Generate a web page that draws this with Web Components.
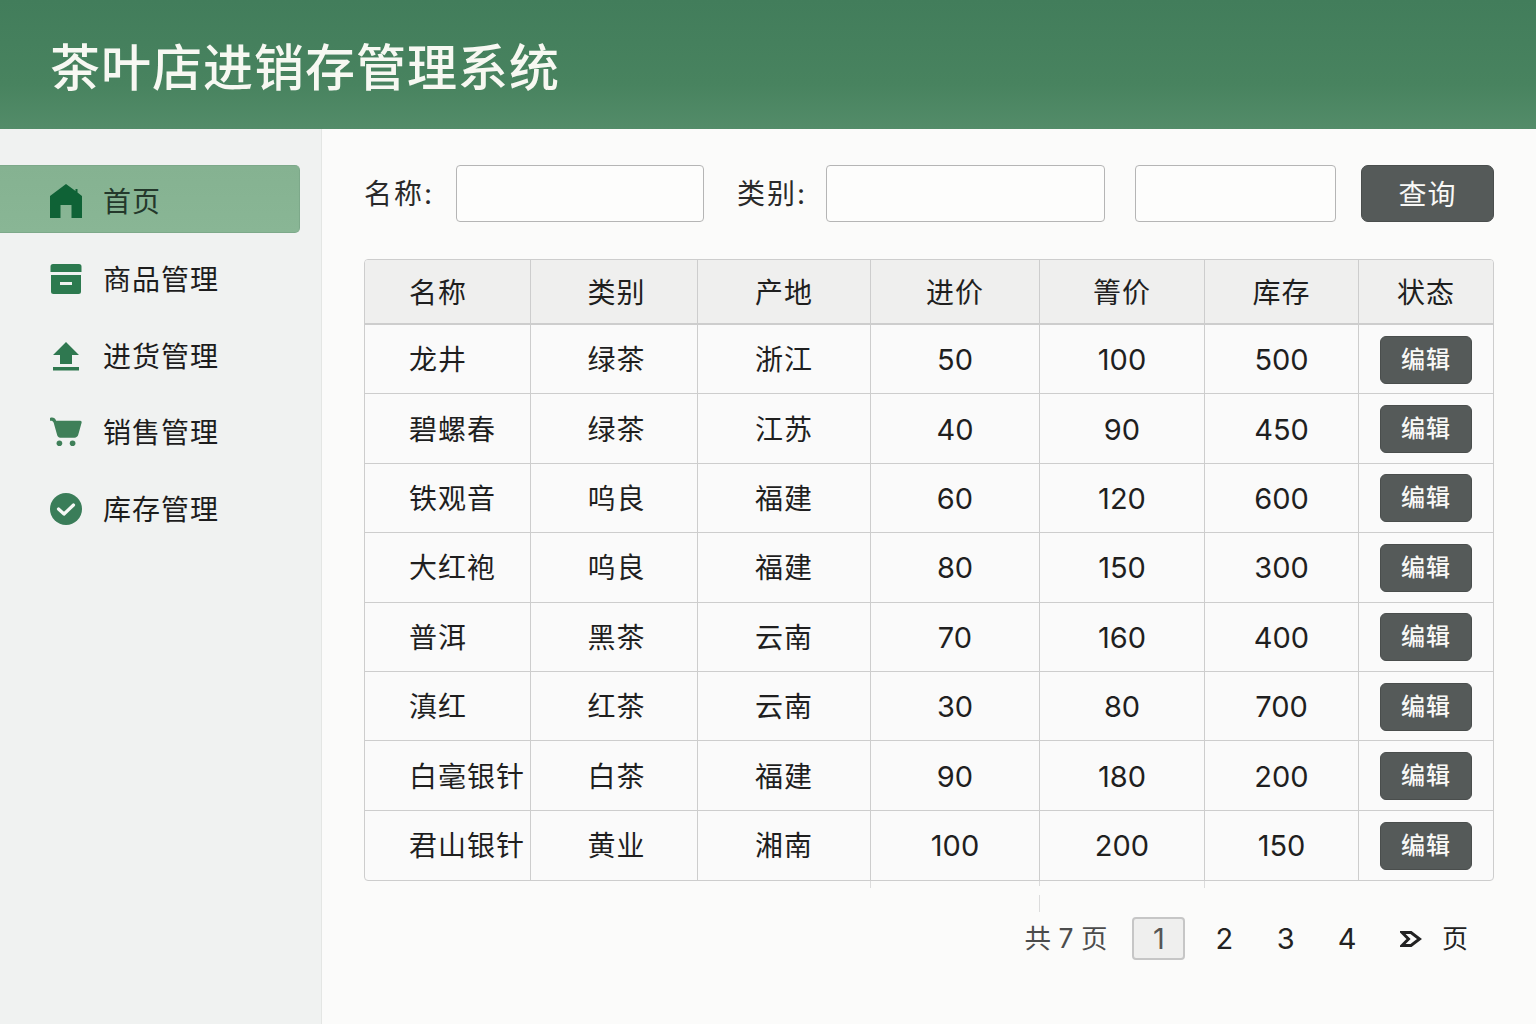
<!DOCTYPE html>
<html lang="zh-CN">
<head>
<meta charset="utf-8">
<title>茶叶店进销存管理系统</title>
<style>
  html, body { margin: 0; padding: 0; height: 100%; background: #fbfbfa; overflow: hidden; }
  body { font-family: "Inter", "Noto Sans CJK SC", sans-serif; color: #1f1f1f; }
</style>
</head>
<body>
<tea-app>
  <app-header slot="top">茶叶店进销存管理系统</app-header>
  <side-nav slot="side">
    <nav-item active label="首页">
      <svg slot="icon" viewBox="0 0 32 36" width="32" height="36"><path fill="#0f6236" d="M16 1 L25.500 8 V6 H27.500 V9.500 L32 13 V35 H21.500 V22 H10.500 V35 H0 V13 Z"/></svg>
    </nav-item>
    <nav-item label="商品管理">
      <svg slot="icon" viewBox="0 0 32 32" width="32" height="32"><path fill="#2c7a4f" d="M3 1 H29 A2.500 2.500 0 0 1 31.500 3.500 V9 H.5 V3.500 A2.500 2.500 0 0 1 3 1 Z M1 12 H31 V28.500 A2.500 2.500 0 0 1 28.500 31 H3.500 A2.500 2.500 0 0 1 1 28.500 Z"/><rect x="10" y="19" width="12" height="3" fill="#f0f2f0"/></svg>
    </nav-item>
    <nav-item label="进货管理">
      <svg slot="icon" viewBox="0 0 32 32" width="32" height="32"><path fill="#2f7850" d="M16 2 L29 15 H22 V24 H10 V15 H3 Z"/><rect x="3" y="27" width="26" height="3.500" fill="#2f7850"/></svg>
    </nav-item>
    <nav-item label="销售管理">
      <svg slot="icon" viewBox="0 0 34 32" width="34" height="32"><path fill="#3f8059" d="M0 1 C3 0 5.500 1 6.500 4 H32 C33.500 4 34 5 33.500 6.500 L30 19 C29.500 21 28 22 26 22 H11 C9 22 8 21 7.500 19 L4 6.500 C3.500 4.500 2.500 4 0 4 Z"/><circle cx="10" cy="28" r="3" fill="#3f8059"/><circle cx="24" cy="28" r="3" fill="#3f8059"/></svg>
    </nav-item>
    <nav-item label="库存管理">
      <svg slot="icon" viewBox="0 0 32 32" width="32" height="32"><circle cx="16" cy="16" r="16" fill="#3a7d59"/><path d="M8.500 16 L14 21 L23.500 12" fill="none" stroke="#f6f8f6" stroke-width="3.200" stroke-linecap="round" stroke-linejoin="round"/></svg>
    </nav-item>
  </side-nav>
  <filter-bar slot="main"></filter-bar>
  <data-table slot="main"></data-table>
  <page-nav slot="main"></page-nav>
</tea-app>

<script>
(function(){
  const CJK = '"Inter", "Noto Sans CJK SC", sans-serif';

  class TeaApp extends HTMLElement {
    constructor() {
      super();
      this.attachShadow({mode: 'open'}).innerHTML = `
        <style>
          :host { display: grid; grid-template-columns: 322px 1fr; grid-template-rows: 129px 895px; width: 1536px; height: 1024px; }
          .top { grid-column: 1 / 3; }
          .side { background: #f0f2f1; border-right: 1px solid #e4e6e4; box-sizing: border-box; padding: 36px 21px 0 0; }
          .main { padding: 36px 42px 0; display: flex; flex-direction: column; background: #fbfbfa; }
        </style>
        <div class="top"><slot name="top"></slot></div>
        <div class="side"><slot name="side"></slot></div>
        <div class="main"><slot name="main"></slot></div>
      `;
    }
  }
  customElements.define('tea-app', TeaApp);

  class AppHeader extends HTMLElement {
    constructor() {
      super();
      this.attachShadow({mode: 'open'}).innerHTML = `
        <style>
          :host { display: flex; align-items: center; height: 129px; box-sizing: border-box; padding: 7px 0 0 50px;
            background: linear-gradient(180deg, #427d5b 0%, #48835f 65%, #538c69 100%);
            color: #f7f8f2; font: 500 50px/1 ${CJK}; letter-spacing: 1px; }
        </style>
        <slot></slot>
      `;
    }
  }
  customElements.define('app-header', AppHeader);

  class SideNav extends HTMLElement {
    constructor() {
      super();
      this.attachShadow({mode: 'open'}).innerHTML = `
        <style>:host { display: flex; flex-direction: column; }</style>
        <slot></slot>
      `;
    }
  }
  customElements.define('side-nav', SideNav);

  class NavItem extends HTMLElement {
    constructor() {
      super();
      this.attachShadow({mode: 'open'}).innerHTML = `
        <style>
          :host { display: flex; align-items: center; height: 76.500px; padding-left: 50px; box-sizing: border-box;
            font: 400 28px/1 ${CJK}; letter-spacing: 1px; color: #1d1d1d; }
          :host([active]) { height: 68px; margin-bottom: 8px; background: linear-gradient(180deg, #85b291, #89b695);
            border: 1px solid #7da98a; border-left: 0; border-radius: 0 5px 5px 0; color: #24382b; padding-top: 3px; }
          .icon { width: 32px; display: flex; justify-content: center; margin-right: 21px; flex: none; }
          .label { padding-top: 2px; }
        </style>
        <span class="icon"><slot name="icon"></slot></span>
        <span class="label"></span>
      `;
    }
    connectedCallback() {
      this.shadowRoot.querySelector('.label').textContent = this.getAttribute('label');
    }
  }
  customElements.define('nav-item', NavItem);

  class UiButton extends HTMLElement {
    constructor() {
      super();
      this.attachShadow({mode: 'open'}).innerHTML = `
        <style>
          :host { display: inline-flex; align-items: center; justify-content: center; box-sizing: border-box;
            background: #555a59; color: #f8f8f6; border: 1px solid #4a4e4d; border-radius: 6px;
            font: 500 24px/1 ${CJK}; width: 92px; height: 48px; }
          :host([big]) { width: 133px; height: 57px; font-weight: 400; font-size: 28px; letter-spacing: 1px; border-radius: 7px; }
        </style>
        <slot></slot>
      `;
    }
  }
  customElements.define('ui-button', UiButton);

  class FilterBar extends HTMLElement {
    constructor() {
      super();
      this.attachShadow({mode: 'open'}).innerHTML = `
        <style>
          :host { display: flex; align-items: center; height: 57px; font: 400 28px/1 ${CJK}; color: #2a2a2a; flex: none; }
          label { letter-spacing: 2px; width: 68px; flex: none; white-space: nowrap; }
          input { box-sizing: border-box; height: 57px; background: #fdfdfc; border: 1px solid #b5b5b5; border-radius: 4px; padding: 0; outline: 0; display: block; flex: none; }
          .a { width: 248px; margin: 0 33px 0 24px; }
          .b { width: 279px; margin: 0 30px 0 21px; }
          .c { width: 201px; margin-right: 25px; }
          ui-button { padding-top: 2px; }
        </style>
        <label>名称:</label><input class="a">
        <label>类别:</label><input class="b">
        <input class="c">
        <ui-button big>查询</ui-button>
      `;
    }
  }
  customElements.define('filter-bar', FilterBar);

  const heads = ['名称', '类别', '产地', '进价', '箐价', '库存', '状态'];
  const rows = [
    ['龙井', '绿茶', '浙江', 50, 100, 500],
    ['碧螺春', '绿茶', '江苏', 40, 90, 450],
    ['铁观音', '呜良', '福建', 60, 120, 600],
    ['大红袍', '呜良', '福建', 80, 150, 300],
    ['普洱', '黑茶', '云南', 70, 160, 400],
    ['滇红', '红茶', '云南', 30, 80, 700],
    ['白毫银针', '白茶', '福建', 90, 180, 200],
    ['君山银针', '黄业', '湘南', 100, 200, 150]
  ];

  class DataTable extends HTMLElement {
    constructor() {
      super();
      const cell = (txt, cls) => `<div class="c ${cls}">${txt}</div>`;
      let html = heads.map((h, i) => cell(h, 'th' + (i === 0 ? ' name' : '') + (i === 1 ? ' cat' : ''))).join('');
      rows.forEach((r, ri) => {
        const last = ri === rows.length - 1 ? ' last' : '';
        html += r.map((v, i) => {
          let cls = last;
          if (i === 0) cls += ' name';
          if (i === 1) cls += ' cat';
          if (i >= 3) cls += ' num';
          return cell(v, cls);
        }).join('');
        html += cell('<ui-button>编辑</ui-button>', 'end' + last);
      });
      this.attachShadow({mode: 'open'}).innerHTML = `
        <style>
          :host { display: block; flex: none; margin-top: 37px; width: 1130px; position: relative; }
          .grid { display: grid; grid-template-columns: 166px 167px 173px 169px 165px 154px 134px;
            grid-template-rows: 65px repeat(8, 69.400px); border: 1px solid #cdcdcd; border-radius: 4px;
            font: 400 28px/1 ${CJK}; color: #1f1f1f; background: #fafafa; overflow: hidden; }
          .c { display: flex; align-items: center; justify-content: center; box-sizing: border-box; padding-top: 2px;
            border-right: 1px solid #cdcdcd; border-bottom: 1px solid #cdcdcd; letter-spacing: 1px; }
          .c:nth-child(7n) { border-right: 0; }
          .last { border-bottom: 0; }
          .th { background: #efefee; border-bottom-width: 2px; }
          .name { justify-content: flex-start; padding-left: 44px; white-space: nowrap; }
          .cat { padding-left: 5px; }
          .num { letter-spacing: 0; font-size: 29px; padding-top: 1px; }
          .end { padding-top: 1px; }
          .tick { position: absolute; width: 1px; background: #dcdcdc; }
        </style>
        <div class="grid">${html}</div>
        <i class="tick" style="left:506px;top:622px;height:7px"></i>
        <i class="tick" style="left:675px;top:622px;height:5px"></i>
        <i class="tick" style="left:675px;top:636px;height:17px"></i>
        <i class="tick" style="left:840px;top:622px;height:7px"></i>
      `;
    }
  }
  customElements.define('data-table', DataTable);

  class PageNav extends HTMLElement {
    constructor() {
      super();
      this.attachShadow({mode: 'open'}).innerHTML = `
        <style>
          :host { display: flex; align-items: center; justify-content: flex-end; flex: none; height: 43px; margin-top: 36px;
            padding-right: 26px; font: 400 29px/1 ${CJK}; color: #222; }
          .total { color: #4c4c4c; font-size: 26.500px; margin-right: 25px; white-space: pre; }
          .on { box-sizing: border-box; width: 53px; height: 43px; display: flex; align-items: center; justify-content: center;
            background: #efefee; border: 2px solid #c6c6c6; border-radius: 4px; color: #555; margin-right: 8px; }
          .p { width: 61.500px; text-align: center; }
          svg { display: block; margin: 0 20px 0 22px; }
          .end { font-size: 26px; }
        </style>
        <span class="total">共 7 页</span>
        <span class="on">1</span>
        <span class="p">2</span><span class="p">3</span><span class="p">4</span>
        <svg viewBox="0 0 22 16" width="22" height="16"><path d="M2 1.500 H11 L19.500 8 L11 14.500 H2 L8.500 8 Z" fill="none" stroke="#222" stroke-width="3" stroke-linejoin="miter"/></svg>
        <span class="end">页</span>
      `;
    }
  }
  customElements.define('page-nav', PageNav);
})();
</script>
</body>
</html>
